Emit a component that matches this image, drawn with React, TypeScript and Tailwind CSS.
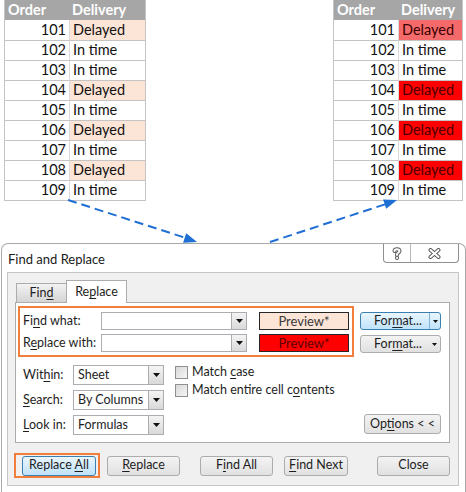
import type { ReactNode } from "react";

// Two small sheets (before / after) joined by dashed arrows to the Excel
// Find and Replace dialog, in its "Replace" tab with format previews.

type Row = { n: number; s: string };

const rows: Row[] = [
  { n: 101, s: "Delayed" },
  { n: 102, s: "In time" },
  { n: 103, s: "In time" },
  { n: 104, s: "Delayed" },
  { n: 105, s: "In time" },
  { n: 106, s: "Delayed" },
  { n: 107, s: "In time" },
  { n: 108, s: "Delayed" },
  { n: 109, s: "In time" },
];

function Sheet({ after }: { after?: boolean }) {
  const cols = after ? "grid-cols-[64px_64px]" : "grid-cols-[64px_76px]";
  const delayedBg = (n: number) => {
    if (!after) return "bg-[#fce4d6] text-[#111]";
    return n === 101 ? "bg-[#f46a6a] text-[#3a0000]" : "bg-[#ff0000] text-[#4a0000]";
  };
  return (
    <div className={`grid ${cols} border-l border-r border-b border-[#c4c4c4] font-['Lato',sans-serif] text-[14.5px] leading-none`}>
      <div className="h-[20px] bg-[#a6a6a6] pl-[3px] flex items-center font-bold text-white">Order</div>
      <div className="h-[20px] bg-[#a6a6a6] pl-[3px] flex items-center font-bold text-white">Delivery</div>
      {rows.map((r, i) => (
        <div key={r.n} className="contents">
          <div className={`h-[20px] flex items-center justify-end pr-[3px] text-[#111] ${i > 0 ? "border-t border-[#c4c4c4]" : ""}`}>
            {r.n}
          </div>
          <div
            className={`h-[20px] flex items-center pl-[3px] border-l border-[#dadada] ${i > 0 ? "border-t border-t-[#c4c4c4]" : ""} ${
              r.s === "Delayed" ? delayedBg(r.n) : "text-[#111]"
            }`}
          >
            {r.s}
          </div>
        </div>
      ))}
    </div>
  );
}

function Arrows() {
  return (
    <svg className="absolute left-0 top-0 pointer-events-none" width="466" height="243" viewBox="0 0 466 243">
      <line x1="68" y1="200" x2="186" y2="238" stroke="#1f6ed4" strokeWidth="2" strokeDasharray="9 5" />
      <polygon points="197,242 186.2,233.3 183.1,242.8" fill="#1f6ed4" />
      <line x1="270" y1="242" x2="386" y2="204" stroke="#1f6ed4" strokeWidth="2" strokeDasharray="9 5" />
      <polygon points="397,200 386.2,208.8 383.1,199.4" fill="#1f6ed4" />
    </svg>
  );
}

function DropArrow() {
  return (
    <div className="w-[15px] h-full border-l border-[#acacac] bg-linear-to-b from-[#f4f4f4] to-[#d9d9d9] flex items-center justify-center">
      <svg width="7" height="4" viewBox="0 0 7 4">
        <polygon points="0,0 7,0 3.5,4" fill="#111" />
      </svg>
    </div>
  );
}

function Combo({ value, className }: { value?: string; className: string }) {
  return (
    <div className={`flex border border-[#abadb3] bg-white ${className}`}>
      <div className="flex-1 flex items-center pl-[4px] text-[#1e1e1e]">{value}</div>
      <DropArrow />
    </div>
  );
}

function Btn({ children, className, focus }: { children: ReactNode; className: string; focus?: boolean }) {
  const look = focus
    ? "border-[#3c7fb1] bg-linear-to-b from-[#eaf6fd] to-[#bfe2fa]"
    : "border-[#acacac] bg-linear-to-b from-[#f3f3f3] to-[#e1e1e1]";
  return (
    <div className={`flex items-center justify-center rounded-[3px] border text-[#1e1e1e] ${look} ${className}`}>
      {children}
    </div>
  );
}

function FormatBtn({ focus }: { focus?: boolean }) {
  return (
    <Btn focus={focus} className="w-[81px] h-[18px] justify-between">
      <span className="flex-1 text-center pl-[6px]">
        For<u className="underline-offset-2">m</u>at...
      </span>
      <span className={`h-full w-[11px] flex items-center justify-center ${focus ? "border-l border-[#7fb2d8]" : ""}`}>
        <svg width="5" height="3" viewBox="0 0 5 3">
          <polygon points="0,0 5,0 2.5,3" fill="#111" />
        </svg>
      </span>
    </Btn>
  );
}

function Check({ children }: { children: ReactNode }) {
  return (
    <div className="flex items-center h-[13px]">
      <div className="w-[13px] h-[13px] border border-[#8e8f8f] bg-linear-to-br from-[#d8d8d8] to-[#f6f6f6]" />
      <span className="ml-[4px] text-[#1e1e1e] whitespace-nowrap">{children}</span>
    </div>
  );
}

function Outline({ d }: { d: string }) {
  return (
    <>
      <path d={d} stroke="#5a5a5a" strokeWidth="4" strokeLinecap="round" strokeLinejoin="round" fill="none" />
      <path d={d} stroke="#ffffff" strokeWidth="2" strokeLinecap="round" strokeLinejoin="round" fill="none" />
    </>
  );
}

function Dialog() {
  return (
    <div className="ml-[1px] w-[465px] h-[260px] border-t border-l border-r border-[#a9a9a9] rounded-t-[7px] bg-white font-['Lato',sans-serif] text-[12.5px] leading-none">
      {/* title bar */}
      <div className="flex justify-between items-start h-[28px]">
        <div className="pl-[6px] pt-[9px] text-[#1a1a1a] text-[13px]">Find and Replace</div>
        <div className="mr-[6px] flex h-[19px] w-[76px] border border-t-0 border-[#8f8f8f] rounded-b-[4px]">
          <div className="w-[27px] border-r border-[#b8b8b8] flex items-center justify-center">
            <svg width="10" height="13" viewBox="0 0 10 13">
              <Outline d="M2.5 4 C2.5 1.6 7.5 1.6 7.5 4 C7.5 5.8 5 5.8 5 7.6 L5 8" />
              <Outline d="M5 10.8 L5 10.9" />
            </svg>
          </div>
          <div className="flex-1 flex items-center justify-center">
            <svg width="13" height="11" viewBox="0 0 13 11">
              <Outline d="M2.5 2 L10.5 9 M10.5 2 L2.5 9" />
            </svg>
          </div>
        </div>
      </div>

      {/* client area */}
      <div className="ml-[5px] w-[452px] h-[214px] border border-[#c6c6c6] bg-[#f0f0f0]">
        <div className="flex items-end ml-[8px] mt-[7px] h-[23px] relative z-10 -mb-px">
          <div className="w-[50px] h-[20px] border border-r-0 border-[#acacac] bg-linear-to-b from-[#f2f2f2] to-[#d5d5d5] flex items-center justify-center text-[#1e1e1e]">
            <span>
              Fin<u className="underline-offset-2">d</u>
            </span>
          </div>
          <div className="w-[61px] h-[23px] border border-b-0 border-[#acacac] bg-white flex items-center justify-center text-[#1e1e1e]">
            <span>
              Re<u className="underline-offset-2">p</u>lace
            </span>
          </div>
        </div>

        <div className="ml-[7px] w-[435px] h-[141px] border border-[#acacac] bg-white">
          <div className="flex items-start">
            <div className="ml-[2px] mt-[3px] w-[336px] h-[51px] border-2 border-[#ef7f3a] pt-[4px] flex flex-col gap-[4px]">
              <div className="flex items-center h-[18px]">
                <div className="w-[81px] pl-[3px] text-[#1e1e1e]">
                  Fi<u className="underline-offset-2">n</u>d what:
                </div>
                <Combo className="w-[146px] h-[18px]" />
                <div className="ml-[12px] w-[90px] h-[18px] border border-[#262626] bg-[#fce4d6] flex items-center justify-center text-[13px] text-[#3a3a3a]">
                  Preview*
                </div>
              </div>
              <div className="flex items-center h-[18px]">
                <div className="w-[81px] pl-[3px] text-[#1e1e1e]">
                  R<u className="underline-offset-2">e</u>place with:
                </div>
                <Combo className="w-[146px] h-[18px]" />
                <div className="ml-[12px] w-[90px] h-[18px] border border-[#262626] bg-[#ff0000] flex items-center justify-center text-[13px] text-[#5c0000]">
                  Preview*
                </div>
              </div>
            </div>
            <div className="ml-[6px] mt-[9px] flex flex-col gap-[5px]">
              <FormatBtn focus />
              <FormatBtn />
            </div>
          </div>

          <div className="flex items-end mt-[8px]">
            <div className="ml-[7px] grid grid-cols-[50px_91px] gap-y-[5px] items-center">
              <div className="text-[#1e1e1e]">
                Wit<u className="underline-offset-2">h</u>in:
              </div>
              <Combo value="Sheet" className="h-[20px]" />
              <div className="text-[#1e1e1e]">
                <u className="underline-offset-2">S</u>earch:
              </div>
              <Combo value="By Columns" className="h-[20px]" />
              <div className="text-[#1e1e1e]">
                <u className="underline-offset-2">L</u>ook in:
              </div>
              <Combo value="Formulas" className="h-[20px]" />
            </div>
            <div className="ml-[11px] self-start mt-[1px] flex flex-col gap-[5px]">
              <Check>
                Match <u className="underline-offset-2">c</u>ase
              </Check>
              <Check>
                Match entire cell c<u className="underline-offset-2">o</u>ntents
              </Check>
            </div>
            <Btn className="ml-auto mr-[8px] mb-[1px] w-[77px] h-[20px]">
              <span>
                Op<u className="underline-offset-2">t</u>ions &lt; &lt;
              </span>
            </Btn>
          </div>
        </div>

        <div className="flex items-center mt-[10px]">
          <div className="ml-[6px] h-[25px] border-2 border-[#ef7f3a] pl-[6px] pr-[2px] flex items-center">
            <Btn focus className="w-[74px] h-[20px]">
              <span>
                Replace <u className="underline-offset-2">A</u>ll
              </span>
            </Btn>
          </div>
          <Btn className="ml-[7px] w-[73px] h-[20px]">
            <span>
              <u className="underline-offset-2">R</u>eplace
            </span>
          </Btn>
          <Btn className="ml-[20px] w-[73px] h-[20px]">
            <span>
              F<u className="underline-offset-2">i</u>nd All
            </span>
          </Btn>
          <Btn className="ml-[11px] w-[64px] h-[20px]">
            <span>
              <u className="underline-offset-2">F</u>ind Next
            </span>
          </Btn>
          <Btn className="ml-[29px] w-[73px] h-[20px]">
            <span>Close</span>
          </Btn>
        </div>
      </div>
    </div>
  );
}

export default function App() {
  return (
    <div className="w-[466px] h-[492px] bg-white overflow-hidden">
      <div className="relative h-[243px]">
        <div className="flex justify-between pl-[4px] pr-[3px]">
          <Sheet />
          <Sheet after />
        </div>
        <Arrows />
      </div>
      <Dialog />
    </div>
  );
}
